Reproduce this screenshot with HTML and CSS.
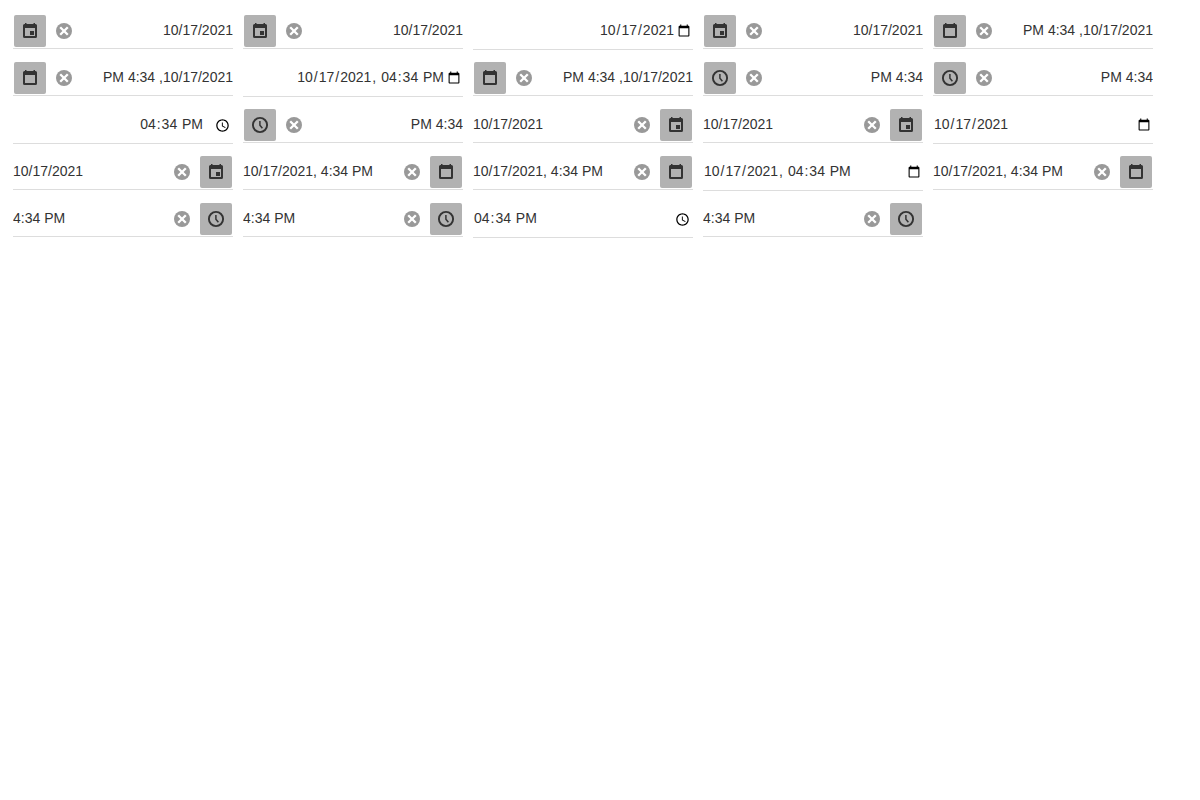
FILE: index.html
```html
<!DOCTYPE html>
<html lang="en">
<head>
<meta charset="utf-8">
<meta name="viewport" content="width=device-width, initial-scale=1">
<title>Date boxes</title>
<link rel="stylesheet" href="styles.css">
</head>
<body>
<svg class="symbols" aria-hidden="true">
  <symbol id="event" viewBox="0 0 18 18">
    <path fill-rule="evenodd" d="M4 1h1.5v1h7V1H14v1h.5A1.5 1.5 0 0 1 16 3.500v11a1.500 1.500 0 0 1-1.500 1.500h-11A1.500 1.500 0 0 1 2 14.500v-11A1.500 1.500 0 0 1 3.500 2H4zM4 6v8h10V6zM9 9h4v4H9z"/>
  </symbol>
  <symbol id="calendar" viewBox="0 0 18 18">
    <path fill-rule="evenodd" d="M4 1h1.500v1h7V1H14v1h.5A1.500 1.500 0 0 1 16 3.500v11a1.500 1.500 0 0 1-1.500 1.500h-11A1.500 1.500 0 0 1 2 14.500v-11A1.500 1.500 0 0 1 3.500 2H4zM4 6v8h10V6z"/>
  </symbol>
  <symbol id="clock" viewBox="0 0 18 18">
    <circle cx="9" cy="9" r="7.100" fill="none" stroke="currentColor" stroke-width="1.900"/>
    <path d="M8.900 5v4.300l2.500 2.900" fill="none" stroke="currentColor" stroke-width="1.500"/>
  </symbol>
  <symbol id="clear" viewBox="0 0 18 18">
    <circle cx="9" cy="9" r="8"/>
    <path d="M5.200 5.200l7.600 7.600M12.800 5.200l-7.600 7.600" fill="none" stroke="#fff" stroke-width="2.300"/>
  </symbol>
</svg>
<main class="boxes" id="boxes"></main>
<script src="app.js"></script>
</body>
</html>
```
FILE: styles.css
```css
body {
  margin: 8px;
  background: #fff;
  color: #333;
  font-family: "Liberation Sans", Arial, sans-serif;
  font-size: 14px;
}

.symbols {
  display: none;
}

.boxes {
  display: flex;
  flex-wrap: wrap;
  align-items: flex-start;
}

.datebox {
  display: flex;
  align-items: center;
  box-sizing: border-box;
  width: 220px;
  height: 36px;
  margin: 5px 5px 6px;
  border-bottom: 1px solid #ddd;
}

.datebox-native {
  height: 37px;
  margin-bottom: 5px;
}

.field {
  box-sizing: border-box;
  flex: 1;
  min-width: 0;
  height: 34px;
  padding: 0 0 2px;
  border: 0;
  outline: 0;
  background: none;
  color: inherit;
  font: inherit;
}

.datebox-native .field {
  height: 36px;
  padding: 0;
}

.field::-webkit-datetime-edit {
  padding-bottom: 3px;
}

.field[type="time"]::-webkit-calendar-picker-indicator {
  width: 15px;
  height: 15px;
}

.align-end .field {
  text-align: right;
}

.align-end .field::-webkit-datetime-edit {
  text-align: right;
}

.align-end .field:not([type="time"])::-webkit-calendar-picker-indicator {
  margin-inline-start: 0;
}

.align-end .field[type="time"]::-webkit-calendar-picker-indicator {
  margin-inline-start: 8px;
}

.clear,
.open {
  display: flex;
  align-items: center;
  justify-content: center;
  flex: none;
  padding: 0;
  border: 0;
}

.clear {
  width: 34px;
  height: 34px;
  margin-top: 1px;
  background: none;
  color: #999;
}

.open {
  width: 32px;
  height: 32px;
  margin: 2px 1px 1px;
  border-radius: 2px;
  background: #b2b2b2;
  color: #333;
}

.icon {
  width: 18px;
  height: 18px;
  fill: currentColor;
}
```
FILE: app.js
```js
const date = "10/17/2021";
const time = "4:34 PM";
const both = date + ", " + time;
const nativeValues = {
  date: "2021-10-17",
  time: "16:34",
  "datetime-local": "2021-10-17T16:34"
};

// Each entry: [direction, icon, text] or [direction, "native", input type]
const items = [
  ["rtl", "event", date],
  ["rtl", "event", date],
  ["rtl", "native", "date"],
  ["rtl", "event", date],
  ["rtl", "calendar", both],
  ["rtl", "calendar", both],
  ["rtl", "native", "datetime-local"],
  ["rtl", "calendar", both],
  ["rtl", "clock", time],
  ["rtl", "clock", time],
  ["rtl", "native", "time"],
  ["rtl", "clock", time],
  ["ltr", "event", date],
  ["ltr", "event", date],
  ["ltr", "native", "date"],
  ["ltr", "event", date],
  ["ltr", "calendar", both],
  ["ltr", "calendar", both],
  ["ltr", "native", "datetime-local"],
  ["ltr", "calendar", both],
  ["ltr", "clock", time],
  ["ltr", "clock", time],
  ["ltr", "native", "time"],
  ["ltr", "clock", time]
];

const icon = name => `<svg class="icon" aria-hidden="true"><use href="#${name}"/></svg>`;

document.getElementById("boxes").innerHTML = items.map(([dir, kind, value]) => {
  if (kind === "native") {
    return `<div class="datebox datebox-native${dir === "rtl" ? " align-end" : ""}">
      <input class="field" type="${value}" value="${nativeValues[value]}" aria-label="${value}">
    </div>`;
  }
  return `<div class="datebox" dir="${dir}">
    <input class="field" type="text" value="${value}" aria-label="Value">
    <button class="clear" type="button" aria-label="Clear">${icon("clear")}</button>
    <button class="open" type="button" aria-label="Select">${icon(kind)}</button>
  </div>`;
}).join("");
```
